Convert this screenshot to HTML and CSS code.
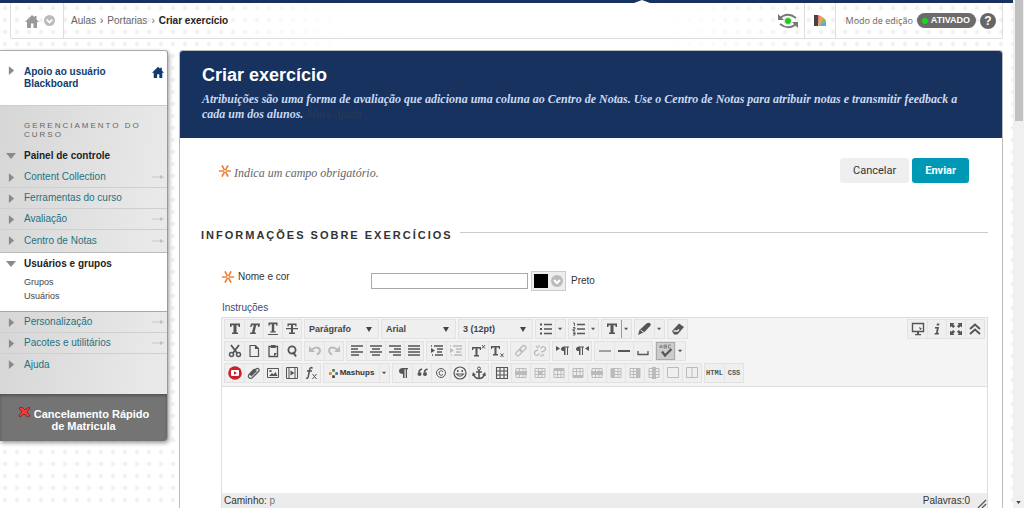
FILE: index.html
```html
<!DOCTYPE html>
<html lang="pt-BR">
<head>
<meta charset="utf-8">
<title>Criar exercício</title>
<link rel="stylesheet" href="styles.css">
</head>
<body>
<svg class="defs" aria-hidden="true">
  <symbol id="home" viewBox="0 0 14 14"><path d="M7 1 0 8h2v6h4V9.500h2.500V14h3.500V8h2L11.500 5.200V2h-2v1.300z" fill="currentColor"/></symbol>
  <symbol id="chev" viewBox="0 0 12 12"><circle cx="6" cy="6" r="6" fill="currentColor"/><path d="m3 5 3 3 3-3" fill="none" stroke="#fff" stroke-width="2"/></symbol>
  <symbol id="req" viewBox="0 0 12 12"><path d="M3.300 1l1.900 3.600M8.700 1 6.800 4.600M3.300 11l1.900-3.600M8.700 11 6.800 7.400M.3 6h4M11.700 6h-4" stroke="#f0813c" stroke-width="1.700" stroke-linecap="round"/></symbol>
  <symbol id="tri" viewBox="0 0 8 10"><path d="M1 0l6 5-6 5z" fill="#8a8a8a"/></symbol>
  <symbol id="trid" viewBox="0 0 10 6"><path d="M0 0h10L5 6z" fill="#8a8a8a"/></symbol>
  <symbol id="go" viewBox="0 0 12 6"><path d="M0 3h9" stroke="#c8c8c8"/><path d="M8 1l4 2-4 2z" fill="#c0c0c0"/></symbol>
  <symbol id="dd" viewBox="0 0 6 4"><path d="M0 .5h5L2.500 3.500z" fill="#555"/></symbol>

  <symbol id="t" viewBox="0 0 14 14"><path d="M2 1.500h10v3.500h-1.300L10.200 3.300H8.500v7.200H10V12H4v-1.500h1.500V3.300H3.800L3.300 5H2z" fill="currentColor"/></symbol>
  <symbol id="ti" viewBox="0 0 14 14"><path d="M4 1.500h9l-.6 3.500h-1.200L10.800 3.200H9.200L7.500 10.500H9L8.700 12H3l.3-1.500h1.600L6.800 3.200H5.300L4.300 5H3.100z" fill="currentColor"/></symbol>
  <symbol id="tu" viewBox="0 0 14 14"><path d="M2.500.5h9v3.200h-1.100L10 2.200H8.200v7h1.500v1.300H4.300V9.200h1.500v-7H4l-.4 1.500H2.500zM2 12h10v1H2z" fill="currentColor"/></symbol>
  <symbol id="ts" viewBox="0 0 14 14"><path d="M2.500 1.500h9v3h-1L10 3H8v3h5v1.200H8v3.300h2V12H4v-1.500h2V7.200H1V6h5V3H4l-.5 1.500h-1z" fill="currentColor"/></symbol>
  <symbol id="ul" viewBox="0 0 14 14"><path d="M5 2.500h8M5 7h8M5 11.500h8" stroke="currentColor" stroke-width="1.600"/><path d="M1 1.500h2v2H1zM1 6h2v2H1zM1 10.500h2v2H1z" fill="currentColor"/></symbol>
  <symbol id="ol" viewBox="0 0 14 14"><path d="M5 2.500h8M5 7h8M5 11.500h8" stroke="currentColor" stroke-width="1.600"/><path d="M1 1h1.500v3M1 5.500h2V7H1v1.500h2M1 10h2v3H1M1 11.500h2" fill="none" stroke="currentColor" stroke-width=".9"/></symbol>
  <symbol id="pen" viewBox="0 0 14 14"><path d="M0 13l1.500-5L8.500 1.500Q12-.5 13 3L6.500 10z" fill="currentColor"/><path d="M2.500 8l3.500 2.500" stroke="#eee"/></symbol>
  <symbol id="eraser" viewBox="0 0 14 14"><path d="M1 9 8 1.500 13 5l-6.500 7.500H3z" fill="currentColor"/><path d="M2.500 9h4l1.500-1.500" fill="none" stroke="#eee" stroke-width="1.500"/></symbol>
  <symbol id="cut" viewBox="0 0 14 14"><path d="M3 1l6 8M11 1 5 9" stroke="currentColor" stroke-width="1.800"/><g fill="none" stroke="currentColor" stroke-width="1.500"><circle cx="3.500" cy="10.500" r="2"/><circle cx="10.500" cy="10.500" r="2"/></g></symbol>
  <symbol id="doc" viewBox="0 0 14 14"><path d="M3 1.500h5.500l3 3v8H3zM8.500 1.500v3h3" fill="none" stroke="currentColor" stroke-width="1.200"/></symbol>
  <symbol id="paste" viewBox="0 0 14 14"><path d="M3 2.500h8.500v10H3z" fill="none" stroke="currentColor" stroke-width="1.300"/><path d="M5 1h4.500v3H5zM8 12.500V9h3z" fill="currentColor"/></symbol>
  <symbol id="find" viewBox="0 0 14 14"><circle cx="7" cy="6" r="3.600" fill="none" stroke="currentColor" stroke-width="1.800"/><path d="M8 8l3 4.500" stroke="currentColor" stroke-width="2"/></symbol>
  <symbol id="undo" viewBox="0 0 14 14"><path d="M3 6q7-5 9 0 0 3-3 4.500" fill="none" stroke="currentColor" stroke-width="2"/><path d="M1 2v6h6z" fill="currentColor"/></symbol>
  <symbol id="redo" viewBox="0 0 14 14"><path d="M11 6Q4 1 2 6q0 3 3 4.500" fill="none" stroke="currentColor" stroke-width="2"/><path d="M13 2v6H7z" fill="currentColor"/></symbol>
  <symbol id="al" viewBox="0 0 14 14"><path d="M1 2h12M1 5h7M1 8h12M1 11h8" stroke="currentColor" stroke-width="1.500"/></symbol>
  <symbol id="ac" viewBox="0 0 14 14"><path d="M1 2h12M3 5h8M1 8h12M3 11h8" stroke="currentColor" stroke-width="1.500"/></symbol>
  <symbol id="ar" viewBox="0 0 14 14"><path d="M1 2h12M6 5h7M1 8h12M5 11h8" stroke="currentColor" stroke-width="1.500"/></symbol>
  <symbol id="aj" viewBox="0 0 14 14"><path d="M1 2h12M1 5h12M1 8h12M1 11h12" stroke="currentColor" stroke-width="1.500"/></symbol>
  <symbol id="ind" viewBox="0 0 14 14"><path d="M1 2h1M4 2h9M7 5h6M7 8h5M2 11h1M5 11h8" stroke="currentColor" stroke-width="1.500"/><path d="M1 4l4 2.500L1 9z" fill="currentColor"/></symbol>
  <symbol id="sup" viewBox="0 0 14 14"><path d="M0 3h9v3H8l-.5-1.500h-2V11H7v1.500H2V11h1.500V4.500h-2L1 6H0z" fill="currentColor"/><path d="M10 1l3 3.500M13 1l-3 3.500" stroke="currentColor"/></symbol>
  <symbol id="sub" viewBox="0 0 14 14"><path d="M0 2h9v3H8l-.5-1.500h-2V10H7v1.500H2V10h1.500V3.500h-2L1 5H0z" fill="currentColor"/><path d="M9.500 9.500l3 3.500M12.500 9.500l-3 3.500" stroke="currentColor"/></symbol>
  <symbol id="link" viewBox="0 0 14 14"><g fill="none" stroke="currentColor" stroke-width="1.300"><rect x="-3" y="-2" width="7" height="4" rx="2" transform="translate(4.500 9) rotate(-45)"/><rect x="-3" y="-2" width="7" height="4" rx="2" transform="translate(8.500 5) rotate(-45)"/></g></symbol>
  <symbol id="unlink" viewBox="0 0 14 14"><path d="M5 6Q1 7 1.500 10q2 3 5-.500M8 8q5-1 4.500-4-2-3-5 .500M3 2l2 2M11 12 9 10M6 1v2M8 13v-2" fill="none" stroke="currentColor" stroke-width="1.300"/></symbol>
  <symbol id="para" viewBox="0 0 14 14"><path d="M7 8Q3 8 3 5t4-3h5v1.300h-1V12H9.700V3.300H8.500V12H7z" fill="currentColor"/></symbol>
  <symbol id="ltr" viewBox="0 0 14 14"><path d="M8 7Q5 7 5 5t3-2.500h5v1h-1V11h-1V3.500h-1.500V11H8zM0 2l4 2.500L0 7z" fill="currentColor"/></symbol>
  <symbol id="rtl" viewBox="0 0 14 14"><path d="M4 7Q1 7 1 5t3-2.500h5v1H8V11H7V3.500H5.500V11H4zM14 2l-4 2.500L14 7z" fill="currentColor"/></symbol>
  <symbol id="hr" viewBox="0 0 14 14"><path d="M1 7h12" stroke="currentColor"/></symbol>
  <symbol id="hr2" viewBox="0 0 14 14"><path d="M1 7h12" stroke="currentColor" stroke-width="2"/></symbol>
  <symbol id="nbsp" viewBox="0 0 14 14"><path d="M2 7v3.500h10V7" fill="none" stroke="currentColor" stroke-width="1.300"/></symbol>
  <symbol id="spell" viewBox="0 0 14 14"><path d="M3 7.500l3 4L12.500 5" fill="none" stroke="currentColor" stroke-width="2.200"/><path d="M1 4V2q1.500-1.500 2 0v2M1 3h2M5 1v3h2.500V1zM5 2.500h2.500M12 1H9.500v3H12" fill="none" stroke="#777" stroke-width=".8"/></symbol>
  <symbol id="tube" viewBox="0 0 14 14"><circle cx="7" cy="7" r="6.800" fill="#cb2129"/><rect x="3" y="4" width="8" height="6" rx="1" fill="#fff"/><path d="M6 5.300v3.400L9 7z" fill="#cb2129"/></symbol>
  <symbol id="clip" viewBox="0 0 14 14"><path d="M3 9l6-6q2-1.500 3 .5.500 1-1 2.500l-6 6q-2.500 1-3.500-1Q1 9 3 7.500L7.500 3M4 10l5.500-5.500" fill="none" stroke="currentColor" stroke-width="1.300"/></symbol>
  <symbol id="img" viewBox="0 0 14 14"><path d="M1.500 2.500h11v9h-11z" fill="none" stroke="currentColor"/><path d="M3 10l3-3 1.500 1.500 2-2.500 2 4zM3.500 4h2v2h-2z" fill="currentColor"/></symbol>
  <symbol id="film" viewBox="0 0 14 14"><path d="M1.500 1.500h11v11h-11zM4 1.500v11M10 1.500v11" fill="none" stroke="currentColor"/><path d="M5.500 4.500v5l4-2.500z" fill="currentColor"/></symbol>
  <symbol id="fx" viewBox="0 0 14 14"><path d="M8.500 2.500Q6.500 0 5.500 4l-1.300 7Q3.500 13 2 12M3 5h5" fill="none" stroke="currentColor" stroke-width="1.500"/><path d="M8.500 8l4 5M12.500 8l-4 5" stroke="currentColor"/></symbol>
  <symbol id="mash" viewBox="0 0 10 10"><path d="M3.500 0h3v3h-3z" fill="#4b8a34"/><path d="M0 3.500h3v3H0z" fill="#e08030"/><path d="M7 3.500h3v3H7z" fill="#2f78ae"/><path d="M3.500 7h3v3h-3z" fill="#444"/></symbol>
  <symbol id="quote" viewBox="0 0 14 14"><path d="M7 3Q4 4 4 6M12.500 3Q9.500 4 9.500 6" fill="none" stroke="currentColor" stroke-width="1.500"/><circle cx="4.500" cy="8" r="2" fill="currentColor"/><circle cx="10" cy="8" r="2" fill="currentColor"/></symbol>
  <symbol id="copy" viewBox="0 0 14 14"><g fill="none" stroke="currentColor"><circle cx="7" cy="7" r="4.500"/><path d="M9 5.500q-3.500-2-4 1.500.5 3.500 4 1.500"/></g></symbol>
  <symbol id="smile" viewBox="0 0 14 14"><g fill="none" stroke="currentColor" stroke-width="1.200"><circle cx="7" cy="7" r="6"/><path d="M3.500 8q3.500 4.500 7 0z"/></g><path d="M4 4h1.500v2H4zM8.500 4H10v2H8.500z" fill="currentColor"/></symbol>
  <symbol id="anchor" viewBox="0 0 14 14"><path d="M7 4v8M4 6h6M1.500 8q1 4.500 5.500 4.500T12.500 8" fill="none" stroke="currentColor" stroke-width="1.600"/><circle cx="7" cy="2.500" r="1.500" fill="none" stroke="currentColor"/><path d="M0 10l1-4 3 3zM14 10l-1-4-3 3z" fill="currentColor"/></symbol>
  <symbol id="table" viewBox="0 0 14 14"><path d="M1.500 1.500h11v11h-11zM1.500 5h11M1.500 9h11M5 1.500v11M9 1.500v11" fill="none" stroke="currentColor" stroke-width="1.100"/></symbol>
  <symbol id="tb1" viewBox="0 0 14 14"><path d="M2 2.500h10v9H2zM5.500 2.500v9M9 2.500v9" fill="none" stroke="currentColor"/><path d="M1 5h12v4H1z" fill="currentColor"/></symbol>
  <symbol id="tb2" viewBox="0 0 14 14"><path d="M2 2.500h10v9H2zM2 5.500h10M2 8.500h10M5.500 2.500v9M9 2.500v9" fill="none" stroke="currentColor"/><path d="M5 5h4v4H5z" fill="currentColor"/></symbol>
  <symbol id="tb3" viewBox="0 0 14 14"><path d="M2 2.500h10v9H2zM2 8.500h10M5.500 2.500v9M9 2.500v9" fill="none" stroke="currentColor"/><path d="M2 2h10v3H2z" fill="currentColor"/></symbol>
  <symbol id="tb4" viewBox="0 0 14 14"><path d="M2 2.500h10v9H2zM2 5.500h10M5.500 2.500v9M9 2.500v9" fill="none" stroke="currentColor"/><path d="M2 9h10v3H2z" fill="currentColor"/></symbol>
  <symbol id="tb5" viewBox="0 0 14 14"><path d="M2 2.500h10v9H2zM2 5.500h10M2 8.500h10M9 2.500v9" fill="none" stroke="currentColor"/><path d="M2 2h4v10H2z" fill="currentColor"/></symbol>
  <symbol id="tb6" viewBox="0 0 14 14"><path d="M2 2.500h10v9H2zM2 5.500h10M2 8.500h10M5.500 2.500v9" fill="none" stroke="currentColor"/><path d="M8 2h4v10H8z" fill="currentColor"/></symbol>
  <symbol id="tb7" viewBox="0 0 14 14"><path d="M2 2.500h10v9H2zM2 5.500h10M2 8.500h10" fill="none" stroke="currentColor"/><path d="M5 1h4v12H5z" fill="currentColor"/></symbol>
  <symbol id="cell" viewBox="0 0 14 14"><path d="M1.500 1.500h11v10h-11z" fill="none" stroke="currentColor"/></symbol>
  <symbol id="cell2" viewBox="0 0 14 14"><path d="M1.500 1.500h11v10h-11zM7 1.500v10" fill="none" stroke="currentColor"/></symbol>
  <symbol id="screen" viewBox="0 0 14 14"><path d="M1.500 1.500h11v8h-11z" fill="none" stroke="currentColor" stroke-width="1.400"/><path d="M6 10h2v2h2v1.300H4V12h2zM8 5l3 1.500L9 8z" fill="currentColor"/></symbol>
  <symbol id="info" viewBox="0 0 14 14"><path d="M7 1.500h2.500L9 3.500H6.500zM5 5h4L7.800 11H9l-.3 1.500H4.500l.3-1.500H6l.8-4.500H4.800z" fill="currentColor"/></symbol>
  <symbol id="full" viewBox="0 0 14 14"><path d="M1 1h4.500L4.200 2.300 6 4.200 4.200 6 2.300 4.200 1 5.500zM13 1v4.500l-1.300-1.300L9.800 6 8 4.200l1.900-1.900L8.500 1zM1 13V8.500l1.300 1.300L4.200 8 6 9.800l-1.800 1.900L5.500 13zM13 13H8.500l1.400-1.300L8 9.800 9.800 8l1.900 1.800L13 8.500z" fill="currentColor"/></symbol>
  <symbol id="up" viewBox="0 0 14 14"><path d="M2 7l5-4.500L12 7M2 12l5-4.500 5 4.500" fill="none" stroke="currentColor" stroke-width="1.900"/></symbol>
</svg>

<div class="page">
  <div class="topbar"></div>
  <header class="crumbs">
    <div class="crumb-icons">
      <a href="#" aria-label="Início"><svg class="i14"><use href="#home"/></svg></a>
      <a href="#" aria-label="Abrir menu"><svg class="i11"><use href="#chev"/></svg></a>
    </div>
    <nav class="trail" aria-label="Trilha"><a href="#">Aulas</a><span>›</span><a href="#">Portarias</a><span>›</span><strong>Criar exercício</strong></nav>
    <div class="tools">
      <button class="plain" aria-label="Visualização do aluno"><svg width="20" height="16" viewBox="0 0 20 16"><g fill="none" stroke="#777" stroke-width="1.800"><path d="M1 6q8-8 17-1M2 11q9 7 17-1"/><circle cx="10" cy="8" r="3.800" stroke="#ddd" stroke-width="1"/></g><path d="M0 1v6h6zM20 15V9h-6z" fill="#777"/><circle cx="10" cy="8" r="3" fill="#18cf18"/></svg></button>
    </div>
    <div class="tools palette">
      <button class="plain" aria-label="Tema"><svg width="14" height="12" viewBox="0 0 14 12"><path d="M1 0h4v11H1z" fill="#444"/><path d="M5 11V0l3 1z" fill="#e8837a"/><path d="M5 11 8 1l3 2z" fill="#f0a03c"/><path d="m5 11 6-8 2 3z" fill="#85b84f"/><path d="m5 11 8-5v5z" fill="#5aa9dc"/></svg></button>
    </div>
    <div class="mode">
      <span>Modo de edição</span>
      <button class="pill"><i></i>ATIVADO</button>
      <button class="help" aria-label="Ajuda">?</button>
    </div>
  </header>

  <div class="columns">
    <aside class="side">
      <div class="side-top">
        <svg class="tri"><use href="#tri"/></svg>
        <a href="#">Apoio ao usuário Blackboard</a>
        <svg class="i12"><use href="#home"/></svg>
      </div>
      <div class="side-gray">
        <h2>Gerenciamento do curso</h2>
        <div class="item head"><svg class="trid"><use href="#trid"/></svg><span>Painel de controle</span></div>
        <div class="item"><svg class="tri"><use href="#tri"/></svg><a href="#">Content Collection</a><svg class="go"><use href="#go"/></svg></div>
        <div class="item"><svg class="tri"><use href="#tri"/></svg><a href="#">Ferramentas do curso</a></div>
        <div class="item"><svg class="tri"><use href="#tri"/></svg><a href="#">Avaliação</a><svg class="go"><use href="#go"/></svg></div>
        <div class="item last"><svg class="tri"><use href="#tri"/></svg><a href="#">Centro de Notas</a><svg class="go"><use href="#go"/></svg></div>
      </div>
      <div class="side-open">
        <div class="item head"><svg class="trid"><use href="#trid"/></svg><span>Usuários e grupos</span></div>
        <a href="#">Grupos</a>
        <a href="#">Usuários</a>
      </div>
      <div class="side-gray bottom">
        <div class="item"><svg class="tri"><use href="#tri"/></svg><a href="#">Personalização</a><svg class="go"><use href="#go"/></svg></div>
        <div class="item"><svg class="tri"><use href="#tri"/></svg><a href="#">Pacotes e utilitários</a><svg class="go"><use href="#go"/></svg></div>
        <div class="item last"><svg class="tri"><use href="#tri"/></svg><a href="#">Ajuda</a></div>
      </div>
      <button class="cancel-enrol"><svg width="13" height="12" viewBox="0 0 13 12"><path d="M1 2l3-1 3 3 4-3 1 1-3 4 3 4-2 1-4-3-4 3-1-2 3-3z" fill="#f23b3b" stroke="#611" stroke-width=".6"/></svg> Cancelamento Rápido<br>de Matricula</button>
    </aside>

    <main class="main">
      <div class="banner">
        <h1>Criar exercício</h1>
        <p>Atribuições são uma forma de avaliação que adiciona uma coluna ao Centro de Notas. Use o Centro de Notas para atribuir notas e transmitir feedback a cada um dos alunos. <a href="#">Mais Ajuda</a></p>
      </div>
      <form class="form">
        <div class="actions">
          <p><svg class="i12"><use href="#req"/></svg>Indica um campo obrigatório.</p>
          <button type="button" class="btn">Cancelar</button>
          <button type="button" class="btn primary">Enviar</button>
        </div>
        <h2 class="section">INFORMAÇÕES SOBRE EXERCÍCIOS</h2>
        <div class="field">
          <label for="name"><svg class="i12"><use href="#req"/></svg>Nome e cor</label>
          <input id="name" type="text">
          <button type="button" class="swatch" aria-label="Escolher cor"><i></i><svg class="i12"><use href="#chev"/></svg></button>
          <span>Preto</span>
        </div>
        <label class="instr" for="body">Instruções</label>
        <div class="editor">
          <div class="toolbar">
            <div class="row">
              <div class="g"><button type="button" aria-label="Negrito"><svg><use href="#t"/></svg></button><button type="button" aria-label="Itálico"><svg><use href="#ti"/></svg></button><button type="button" aria-label="Sublinhado"><svg><use href="#tu"/></svg></button><button type="button" aria-label="Tachado"><svg><use href="#ts"/></svg></button></div>
              <div class="sel"><select aria-label="Formato"><option>Parágrafo</option></select></div>
              <div class="sel"><select aria-label="Fonte"><option>Arial</option></select></div>
              <div class="sel"><select aria-label="Tamanho"><option>3 (12pt)</option></select></div>
              <div class="g"><button type="button" aria-label="Lista"><svg><use href="#ul"/></svg></button><button type="button" class="dd" aria-label="Mais"><svg><use href="#dd"/></svg></button></div>
              <div class="g"><button type="button" aria-label="Lista numerada"><svg><use href="#ol"/></svg></button><button type="button" class="dd" aria-label="Mais"><svg><use href="#dd"/></svg></button></div>
              <div class="g color"><button type="button" aria-label="Cor do texto"><svg><use href="#t"/></svg></button><button type="button" class="dd" aria-label="Mais"><svg><use href="#dd"/></svg></button></div>
              <div class="g"><button type="button" aria-label="Realce"><svg><use href="#pen"/></svg></button><button type="button" class="dd" aria-label="Mais"><svg><use href="#dd"/></svg></button></div>
              <div class="g"><button type="button" aria-label="Limpar formatação"><svg><use href="#eraser"/></svg></button></div>
              <div class="g end"><button type="button" aria-label="Visualizar"><svg><use href="#screen"/></svg></button><button type="button" aria-label="Informações"><svg><use href="#info"/></svg></button><button type="button" aria-label="Tela cheia"><svg><use href="#full"/></svg></button><button type="button" aria-label="Recolher"><svg><use href="#up"/></svg></button></div>
            </div>
            <div class="row">
              <div class="g"><button type="button" aria-label="Recortar"><svg><use href="#cut"/></svg></button><button type="button" aria-label="Copiar"><svg><use href="#doc"/></svg></button><button type="button" aria-label="Colar"><svg><use href="#paste"/></svg></button><button type="button" aria-label="Localizar"><svg><use href="#find"/></svg></button></div>
              <div class="g"><button type="button" disabled aria-label="Desfazer"><svg><use href="#undo"/></svg></button><button type="button" disabled aria-label="Refazer"><svg><use href="#redo"/></svg></button></div>
              <div class="g"><button type="button" aria-label="Esquerda"><svg><use href="#al"/></svg></button><button type="button" aria-label="Centro"><svg><use href="#ac"/></svg></button><button type="button" aria-label="Direita"><svg><use href="#ar"/></svg></button><button type="button" aria-label="Justificar"><svg><use href="#aj"/></svg></button></div>
              <div class="g"><button type="button" aria-label="Aumentar recuo"><svg><use href="#ind"/></svg></button><button type="button" disabled aria-label="Diminuir recuo"><svg><use href="#ind"/></svg></button></div>
              <div class="g"><button type="button" aria-label="Sobrescrito"><svg><use href="#sup"/></svg></button><button type="button" aria-label="Subscrito"><svg><use href="#sub"/></svg></button></div>
              <div class="g"><button type="button" disabled aria-label="Link"><svg><use href="#link"/></svg></button><button type="button" disabled aria-label="Remover link"><svg><use href="#unlink"/></svg></button></div>
              <div class="g"><button type="button" aria-label="Esquerda para direita"><svg><use href="#ltr"/></svg></button><button type="button" aria-label="Direita para esquerda"><svg><use href="#rtl"/></svg></button></div>
              <div class="g"><button type="button" aria-label="Linha"><svg><use href="#hr"/></svg></button><button type="button" aria-label="Linha grossa"><svg><use href="#hr2"/></svg></button><button type="button" aria-label="Espaço"><svg><use href="#nbsp"/></svg></button></div>
              <div class="g"><button type="button" class="on" aria-label="Ortografia"><svg><use href="#spell"/></svg></button><button type="button" class="dd" aria-label="Mais"><svg><use href="#dd"/></svg></button></div>
            </div>
            <div class="row">
              <div class="g"><button type="button" aria-label="Vídeo"><svg><use href="#tube"/></svg></button><button type="button" aria-label="Anexo"><svg><use href="#clip"/></svg></button><button type="button" aria-label="Imagem"><svg><use href="#img"/></svg></button><button type="button" aria-label="Mídia"><svg><use href="#film"/></svg></button><button type="button" aria-label="Fórmula"><svg><use href="#fx"/></svg></button></div>
              <div class="g"><button type="button" class="mash"><svg><use href="#mash"/></svg>Mashups</button><button type="button" class="dd" aria-label="Mais"><svg><use href="#dd"/></svg></button></div>
              <div class="g"><button type="button" aria-label="Parágrafo"><svg><use href="#para"/></svg></button><button type="button" aria-label="Citação"><svg><use href="#quote"/></svg></button><button type="button" aria-label="Símbolo"><svg><use href="#copy"/></svg></button><button type="button" aria-label="Emoticon"><svg><use href="#smile"/></svg></button><button type="button" aria-label="Âncora"><svg><use href="#anchor"/></svg></button></div>
              <div class="g"><button type="button" aria-label="Tabela"><svg><use href="#table"/></svg></button><button type="button" disabled aria-label="Linha da tabela"><svg><use href="#tb1"/></svg></button><button type="button" disabled aria-label="Célula"><svg><use href="#tb2"/></svg></button><button type="button" disabled aria-label="Linha acima"><svg><use href="#tb3"/></svg></button><button type="button" disabled aria-label="Linha abaixo"><svg><use href="#tb4"/></svg></button><button type="button" disabled aria-label="Excluir linha"><svg><use href="#tb1"/></svg></button><button type="button" disabled aria-label="Coluna à esquerda"><svg><use href="#tb5"/></svg></button><button type="button" disabled aria-label="Coluna à direita"><svg><use href="#tb6"/></svg></button><button type="button" disabled aria-label="Excluir coluna"><svg><use href="#tb7"/></svg></button><button type="button" disabled aria-label="Mesclar"><svg><use href="#cell"/></svg></button><button type="button" disabled aria-label="Dividir"><svg><use href="#cell2"/></svg></button></div>
              <div class="g"><button type="button" class="code">HTML</button><button type="button" class="code">CSS</button></div>
            </div>
          </div>
          <textarea id="body"></textarea>
          <div class="status"><span>Caminho: <a href="#">p</a></span><span class="words">Palavras:0</span><svg width="10" height="10" viewBox="0 0 10 10"><path d="M1 10l8-8M5 10l4-4" stroke="#555" stroke-width="1.200"/></svg></div>
        </div>
      </form>
    </main>
  </div>
</div>
<div class="scroll"><div class="thumb"></div><svg width="5" height="3" viewBox="0 0 6 4"><path d="M0 0h6L3 4z" fill="#444"/></svg></div>
</body>
</html>
```
FILE: styles.css
```css
* { box-sizing: border-box; }
body {
  margin: 0;
  height: 100vh;
  overflow: hidden;
  display: flex;
  font: 10px/12px "Liberation Sans", Arial, sans-serif;
  color: #333;
}
a { color: inherit; text-decoration: none; }
button, input, select, textarea { font: inherit; color: inherit; margin: 0; }
button { padding: 0; border: 0; background: none; }
svg { display: block; flex: none; }
.defs { position: absolute; width: 0; height: 0; }
.i11 { width: 11px; height: 11px; }
.i12 { width: 12px; height: 12px; }
.i14 { width: 14px; height: 14px; }

.page {
  flex: 1;
  min-width: 0;
  display: flex;
  flex-direction: column;
  background:
    linear-gradient(90deg, transparent 20%, #fff 35%, #fff 65%, transparent 80%),
    radial-gradient(circle, #efefef 1px, #f7f7f7 2px, transparent 3px) -1px 2px / 12px 12px,
    #fff;
}
.topbar { height: 3px; background: #17325f; flex: none; position: relative; }
.topbar::after {
  content: "";
  position: absolute;
  left: 62%;
  bottom: 0;
  margin-left: 6px;
  border: 8px solid transparent;
  border-top: 0;
  border-bottom: 3px solid #fff;
}

.crumbs {
  flex: none;
  display: flex;
  height: 36px;
  margin: 0 10px;
  border: 1px solid #ddd;
  border-top: 0;
  border-radius: 0 0 2px 2px;
  color: #666;
}
.crumb-icons {
  display: flex;
  align-items: center;
  gap: 5px;
  padding: 0 8px 0 14px;
  border-right: 1px solid #ddd;
  color: #999;
}
.crumb-icons a + a { color: #bbb; }
.trail { flex: 1; display: flex; gap: 4px; align-items: center; padding-left: 7px; }
.trail strong { color: #222; }
.tools { display: flex; align-items: center; padding: 0 6px; border-right: 1px solid #ddd; }
.palette { padding: 0 8px; }
.mode { display: flex; align-items: center; gap: 4px; padding: 0 6px 0 10px; font: 9px/12px "Open Sans", sans-serif; }
.pill {
  display: flex;
  align-items: center;
  gap: 3px;
  height: 15px;
  padding: 0 6px 0 5px;
  border-radius: 8px;
  background: #6b6b6b;
  color: #fff;
  font: bold 9px/15px "Liberation Sans", Arial, sans-serif;
}
.pill i { width: 6px; height: 6px; border-radius: 3px; background: #18d818; }
.help {
  width: 16px;
  height: 16px;
  border-radius: 8px;
  background: #666;
  color: #fff;
  font: bold 12px/16px "Liberation Sans", Arial, sans-serif;
}

.columns { flex: 1; min-height: 0; display: flex; align-items: stretch; gap: 11px; margin: 11px 10px 0 0; }
.side {
  width: 168px;
  flex: none;
  align-self: flex-start;
  border-top: 1px solid #aaa;
  border-right: 1px solid #999;
  border-radius: 0 3px 4px 0;
  box-shadow: 1px 2px 4px rgba(0, 0, 0, .4);
  background: #fff;
  overflow: hidden;
}
.side-top {
  display: flex;
  align-items: flex-start;
  gap: 9px;
  height: 54px;
  padding: 15px 3px 0 8px;
  color: #123c70;
  font-weight: bold;
}
.side-top a { width: 100px; margin-right: auto; }
.tri { width: 7px; height: 9px; }
.trid { width: 10px; height: 6px; }
.go { width: 12px; height: 6px; margin-left: auto; }
.side-gray { background: linear-gradient(100deg, #d6d6d6, #e9e9e9 90%); border-top: 1px solid #ccc; border-bottom: 1px solid #bbb; }
.side-gray h2 {
  margin: 0;
  padding: 15px 10px 6px 24px;
  font: 8px/9px "Liberation Sans", Arial, sans-serif;
  letter-spacing: 2px;
  text-transform: uppercase;
  color: #666;
}
.item {
  display: flex;
  align-items: center;
  gap: 9px;
  height: 21px;
  padding: 0 3px 0 8px;
  border-bottom: 1px solid #cfcfcf;
  color: #1f7180;
}
.item.last { border-bottom-color: transparent; }
.head { border: 0; height: 22px; padding-left: 6px; gap: 8px; font-weight: bold; color: #222; }
.side-gray .last { height: 22px; }
.side-open { display: flex; flex-direction: column; padding-bottom: 8px; font-size: 9px; line-height: 14px; color: #444; }
.side-open .head { font-size: 10px; }
.side-open > a { padding-left: 24px; }
.side-gray.bottom { padding-bottom: 18px; border-color: #aaa; border-bottom: 0; }
.cancel-enrol {
  display: block;
  width: 100%;
  padding: 12px 4px 9px;
  background: #747474;
  box-shadow: inset 0 2px 3px #555;
  color: #fff;
  font: bold 10px/12px "Liberation Sans", Arial, sans-serif;
  font-size: 11px;
  text-align: center;
}
.cancel-enrol svg { display: inline-block; }

.main {
  flex: 1;
  min-width: 0;
  display: flex;
  flex-direction: column;
  border: 1px solid #bbb;
  border-bottom: 0;
  border-radius: 4px 4px 0 0;
  background: #fff;
  overflow: hidden;
}
.banner { padding: 14px 40px 16px 22px; background: #17325f; color: #c9d9f2; }
.banner h1 { margin: 0 0 7px; font-size: 18px; line-height: 20px; color: #fff; }
.banner p { margin: 0; font: italic bold 12px/15px "Liberation Serif", "Times New Roman", serif; }
.banner a { color: #2b3950; font-weight: normal; }

.form { flex: 1; min-height: 0; display: flex; flex-direction: column; padding: 20px 14px 0 21px; }
.actions { display: flex; gap: 3px; align-items: center; padding: 0 19px 0 18px; }
.actions p {
  flex: 1;
  display: flex;
  gap: 3px;
  margin: 0;
  padding-top: 5px;
  font: italic 12px/16px "Liberation Serif", "Times New Roman", serif;
  color: #666;
}
.btn {
  height: 25px;
  padding: 0 13px;
  border-radius: 3px;
  background: #efefef;
  color: #333;
  font: 11px/25px Roboto, sans-serif;
}
.primary { background: #0099b5; color: #fff; font-weight: bold; }
.section {
  display: flex;
  align-items: center;
  gap: 7px;
  margin: 44px 0 0;
  font-size: 11px;
  line-height: 16px;
  letter-spacing: 2px;
  color: #333;
}
.section::after { content: ""; flex: 1; height: 5px; border-top: 1px solid #ccc; }
.field { display: flex; align-items: center; gap: 3px; margin: 28px 0 0 21px; }
.field label { display: flex; gap: 4px; width: 146px; height: 20px; line-height: 12px; }
.field input { width: 157px; height: 16px; padding: 0 3px; border: 1px solid #aaa; background: #fff; }
.swatch {
  display: flex;
  align-items: center;
  gap: 3px;
  height: 20px;
  padding: 0 2px;
  border: 1px solid #ccc;
  background: #eee;
  color: #bbb;
}
.swatch i { width: 14px; height: 14px; background: #000; }
.field span { margin-left: 2px; }
.instr { margin: 11px 0 3px 21px; color: #3a4a7a; }

.editor {
  flex: 1;
  min-height: 0;
  display: flex;
  flex-direction: column;
  margin-left: 20px;
  border: 1px solid #ddd;
  border-bottom: 0;
}
.toolbar { display: flex; flex-direction: column; gap: 2px; padding: 1px 2px 3px; background: #f4f4f4; border-bottom: 1px solid #ddd; }
.row { display: flex; gap: 2px; height: 20px; }
.g { display: flex; border: 1px solid #e2e2e2; background: #efefef; color: #555; }
.g.end { margin-left: auto; }
.g button { width: 19px; display: flex; align-items: center; justify-content: center; }
.g button + button { border-left: 1px solid #e4e4e4; }
.g button svg { width: 14px; height: 14px; }
.g button:disabled { color: #bbb; }
.g .dd { width: 10px; }
.g .dd svg { width: 5px; height: 4px; }
.g.color button + button { border-left-color: #999; }
.g .on { background: #ccc; box-shadow: inset 0 0 0 1px #aaa; }
.g .mash { width: 55px; gap: 2px; font: bold 8px/18px "Liberation Sans", Arial, sans-serif; color: #333; }
.g .mash svg { width: 9px; height: 9px; }
.g .code { font: bold 7px/18px "Liberation Mono", monospace; }
.sel { position: relative; display: flex; width: 75px; border: 1px solid #e2e2e2; background: #efefef; }
.sel select {
  appearance: none;
  width: 100%;
  border: 0;
  padding: 0 0 0 4px;
  background: none;
  font: bold 9px/18px "Liberation Sans", Arial, sans-serif;
  color: #444;
}
.sel::after {
  content: "";
  position: absolute;
  right: 6px;
  top: 7px;
  border: 3px solid transparent;
  border-top: 5px solid #444;
  border-bottom: 0;
}
.editor textarea { flex: 1; min-height: 0; border: 0; padding: 4px; resize: none; background: #fff; }
.status { display: flex; align-items: center; height: 15px; padding-left: 2px; background: #ececec; }
.status a { color: #777; }
.words { margin-left: auto; margin-right: 7px; }
.status svg { align-self: flex-end; }

.scroll { width: 11px; flex: none; display: flex; flex-direction: column; align-items: center; justify-content: space-between; padding-bottom: 4px; background: #f0f0f0; }
.thumb { width: 8px; height: 24%; background: #c1c1c1; }
```
